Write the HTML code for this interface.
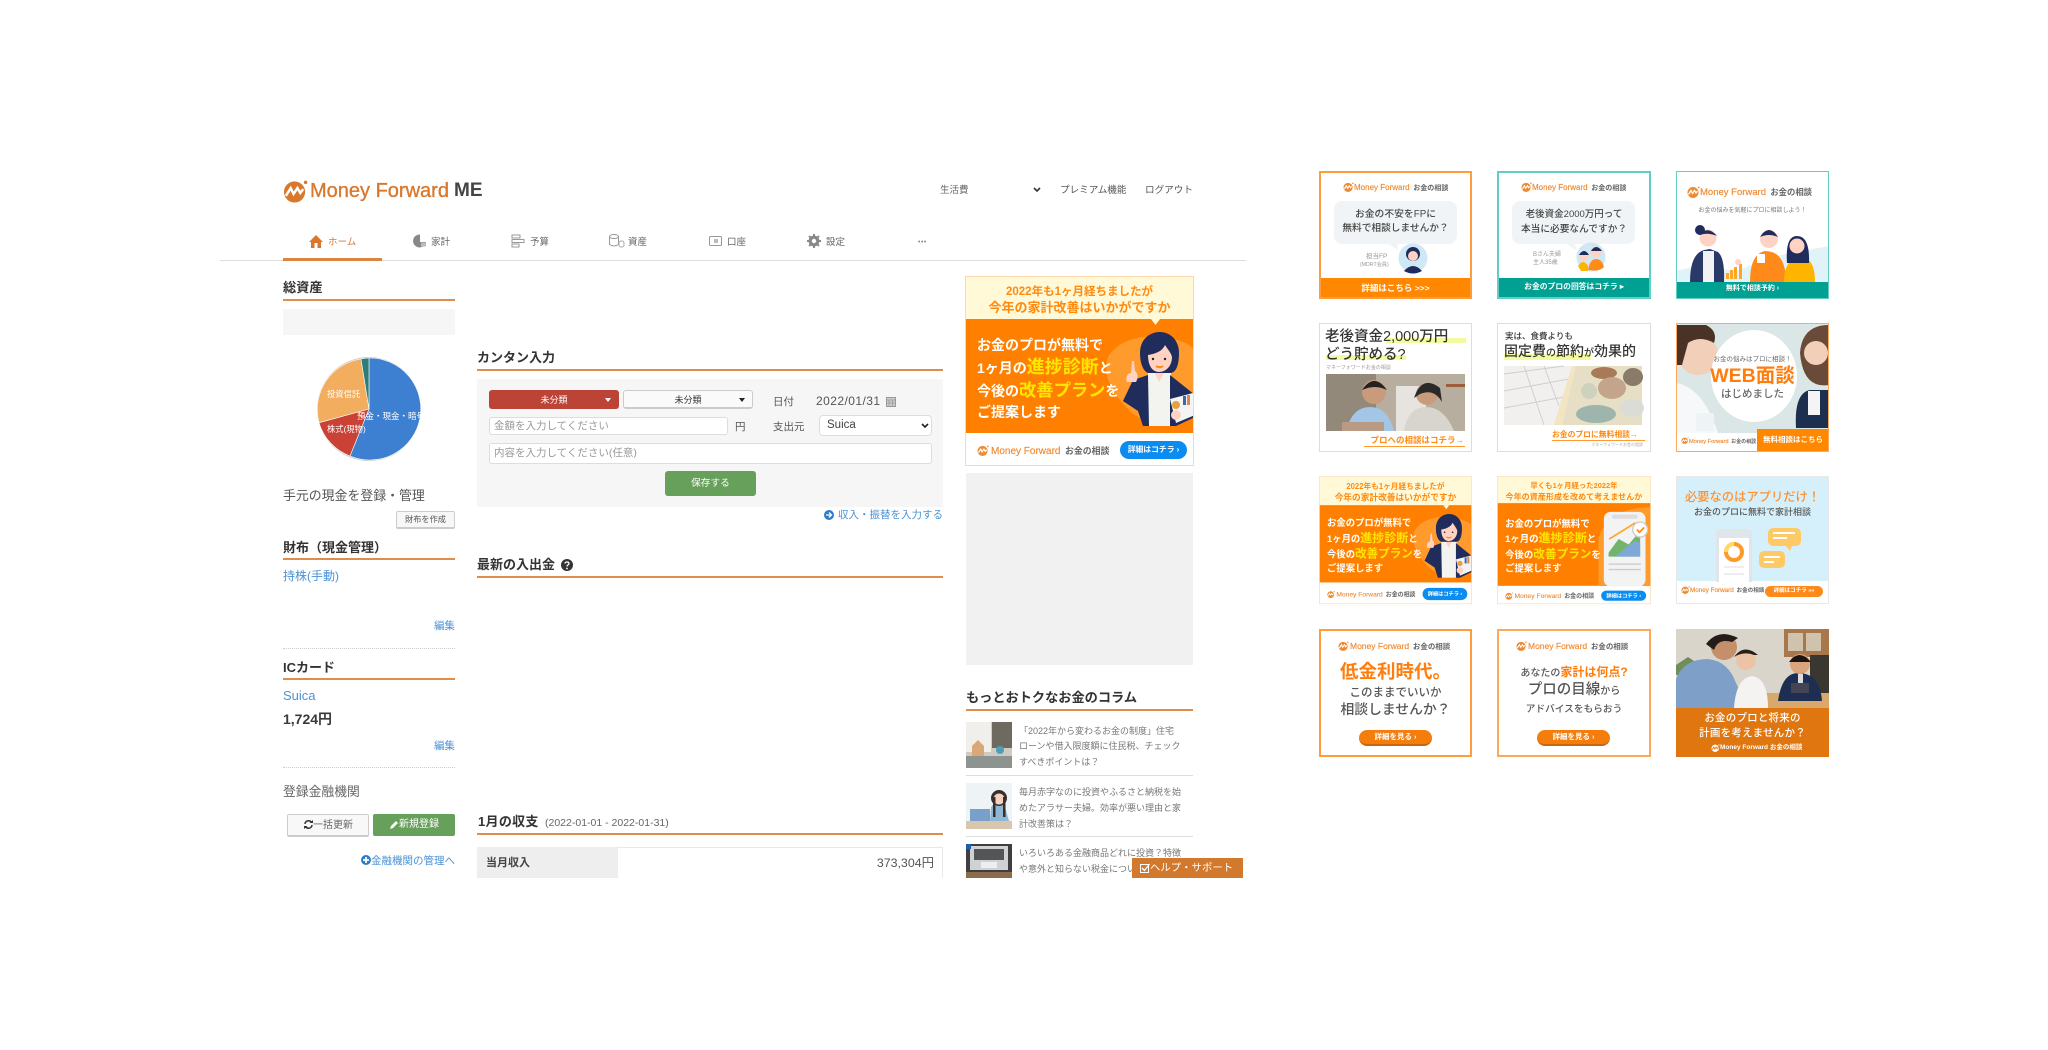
<!DOCTYPE html>
<html lang="ja"><head><meta charset="utf-8"><title>Money Forward ME</title>
<style>
html,body{margin:0;padding:0;background:#fff}
body{width:2048px;height:1050px;overflow:hidden;position:relative;font-family:"Liberation Sans","Noto Sans CJK JP",sans-serif;color:#444}
#w{position:absolute;left:0;top:0;width:2048px;height:1050px;filter:blur(.35px)}
#p{position:absolute;left:0;top:0;width:1300px;height:878px;overflow:hidden}
.t{position:absolute;white-space:nowrap;line-height:0;margin-top:1px}
.c{left:0;width:100%;text-align:center}
.r{position:absolute}
svg.s{position:absolute;overflow:visible}
.h{font-weight:700;font-size:13px;color:#333}
.u{position:absolute;height:2px;background:#e08c4c}
.lk{color:#4a93d6}
.inp{position:absolute;background:#fff;border:1px solid #ddd;border-radius:3px;box-sizing:border-box}
.ad{position:absolute;overflow:hidden;box-sizing:border-box;background:#fff}
.big{width:229px;height:189px;transform-origin:0 0;border:1px solid #fbd9ae}
.lg{font-size:8px;color:#ee8a32;-webkit-text-stroke:.15px #ee8a32}
.lg b{font-size:.88em;color:#666;font-weight:700;margin-left:.2em;-webkit-text-stroke:0}
.y{color:#ffe600}
.w{color:#fff;font-weight:700}
.o{color:#ff8a10;font-weight:700}
.g{color:#555;font-weight:700}
</style></head><body>
<svg width="0" height="0" style="position:absolute"><defs>
<symbol id="mf" viewBox="0 0 26 24"><circle cx="12" cy="13" r="11" fill="currentColor"/><path d="M3 17 L8 9 L11 15 L15 9 L18 14 L21 10" fill="none" stroke="var(--z,#fff)" stroke-width="2.6"/><circle cx="23.5" cy="3" r="1.8" fill="currentColor"/></symbol>
<symbol id="girl" viewBox="0 0 229 189">
<path d="M142 80C150 66 170 58 190 60C210 60 229 68 229 76L229 132C215 148 180 152 162 132C146 116 136 98 142 80Z" fill="#ff9a2c"/>
<rect x="182" y="96" width="23" height="53" fill="#f3f3f0"/>
<path d="M182 98L167 103L157 124L172 134L177 149L183 149Z" fill="#1f2c5c"/>
<path d="M204 98L229 118V140L210 149L204 149Z" fill="#1f2c5c"/>
<path d="M187 92L193 105L200 92Z" fill="#ffd2c4"/>
<path d="M174 76C174 62 184 55 194 55C204 55 213 63 213 76C213 88 210 96 204 96H182C177 94 174 86 174 76Z" fill="#1f2c5c"/>
<path d="M182 78C188 77 196 75 199 68C203 74 205 76 206 80C206 89 200 95 193 95C186 95 182 88 182 78Z" fill="#ffd2c4"/>
<path d="M190 89q4 2.500 7 0" stroke="#ff8a10" stroke-width="2" fill="none"/>
<circle cx="187" cy="82" r="1.200" fill="#222"/><circle cx="199" cy="82" r="1.200" fill="#222"/>
<path d="M165 96C160 96 160 102 161 105L170 105C173 100 171 95 169 94L168 84L166 84Z" fill="#ffd2c4"/>
<path d="M204 122L227 116L229 138L210 146Z" fill="#f4f4f4"/><circle cx="210" cy="128" r="4" fill="#e9a23a"/><rect x="217" y="119" width="3" height="9" fill="#3b6aa8"/><rect x="221" y="118" width="3" height="10" fill="#d84"/><circle cx="210" cy="138" r="5" fill="#ffd2c4"/>
</symbol>
</defs></svg>
<div id="w">
<div id="p">
<!-- header -->
<svg class="s" style="left:283px;top:179px;width:25px;height:24px;color:#d9782d"><use href="#mf"/></svg>
<div class="t lg" style="left:310px;top:190px;font-size:20px;color:#d9782d;-webkit-text-stroke:.35px #d9782d">Money Forward</div>
<div class="t" style="left:454px;top:190px;font-size:19px;color:#444;font-weight:700">ME</div>
<div class="t" style="left:940px;top:190px;font-size:9.500px;color:#666">生活費</div>
<svg class="s" style="left:1033px;top:187px;width:8px;height:6px"><path d="M1 1l3 3 3-3" stroke="#333" stroke-width="1.600" fill="none"/></svg>
<div class="t" style="left:1060px;top:190px;font-size:9.600px;color:#555">プレミアム機能</div>
<div class="t" style="left:1145px;top:190px;font-size:9.600px;color:#555">ログアウト</div>
<!-- nav -->
<div class="r" style="left:220px;top:260px;width:1026px;height:1px;background:#ddd"></div>
<div class="r" style="left:283px;top:258px;width:99px;height:3px;background:#dc8540"></div>
<svg class="s" style="left:309px;top:235px;width:14px;height:13px"><path d="M7 0L14 7H12V13H8.500V8H5.500V13H2V7H0Z" fill="#d9782d"/></svg>
<div class="t" style="left:328px;top:242px;font-size:9.500px;color:#d9782d">ホーム</div>
<svg class="s" style="left:413px;top:234px;width:14px;height:14px"><path d="M7 .5A6.500 6.500 0 1 0 13 8H7Z" fill="#888"/><rect x="8" y="8.500" width="5" height="4" fill="#bbb"/></svg>
<div class="t" style="left:431px;top:242px;font-size:9.500px;color:#666">家計</div>
<svg class="s" style="left:511px;top:234px;width:14px;height:14px"><path d="M1 1h8v3H1zM1 5.500h12v3H1zM1 10h7v3H1z" fill="none" stroke="#999" stroke-width="1"/></svg>
<div class="t" style="left:530px;top:242px;font-size:9.500px;color:#666">予算</div>
<svg class="s" style="left:609px;top:234px;width:15px;height:14px"><ellipse cx="5" cy="2.500" rx="4.500" ry="2" fill="none" stroke="#999"/><path d="M.5 2.500v8q4.500 3 9 0v-8" fill="none" stroke="#999"/><rect x="10" y="7" width="5" height="6" rx="2" fill="none" stroke="#aaa"/></svg>
<div class="t" style="left:628px;top:242px;font-size:9.500px;color:#666">資産</div>
<svg class="s" style="left:709px;top:235px;width:13px;height:12px"><rect x=".5" y="1.500" width="12" height="9" rx="1" fill="none" stroke="#999"/><rect x="5" y="4" width="4" height="4" fill="#bbb"/></svg>
<div class="t" style="left:727px;top:242px;font-size:9.500px;color:#666">口座</div>
<svg class="s" style="left:807px;top:234px;width:14px;height:14px"><circle cx="7" cy="7" r="3.800" fill="none" stroke="#888" stroke-width="3.200"/><path d="M7 0v14M0 7h14M2 2l10 10M12 2L2 12" stroke="#888" stroke-width="2" stroke-dasharray="2 10"/></svg>
<div class="t" style="left:826px;top:242px;font-size:9.500px;color:#666">設定</div>
<div class="t" style="left:918px;top:242px;font-size:7px;color:#888;letter-spacing:.5px">•••</div>

<!-- left col -->
<div class="t h" style="left:283px;top:287px;font-size:13.200px">総資産</div><div class="u" style="left:283px;top:299px;width:172px"></div>
<div class="r" style="left:283px;top:309px;width:172px;height:26px;background:#f6f6f6;border-radius:2px"></div>
<svg class="s" style="left:0;top:1px;width:500px;height:500px">
<circle cx="369" cy="408" r="52" fill="#ccc"/>
<path d="M369 408L369 357A51 51 0 1 1 350 455Z" fill="#3d7fd0" stroke="#fff" stroke-width=".6"/>
<path d="M369 408L350 455A51 51 0 0 1 319 421.700Z" fill="#c94235" stroke="#fff" stroke-width=".6"/>
<path d="M369 408L319 421.700A51 51 0 0 1 361 358Z" fill="#f2ad5e" stroke="#fff" stroke-width=".6"/>
<path d="M369 408L361 358A51 51 0 0 1 369 357Z" fill="#2f7d79" stroke="#fff" stroke-width=".6"/>
</svg>
<div class="t" style="left:327px;top:393px;font-size:8.300px;color:#fff">投資信託</div>
<div class="r" style="left:357px;top:410px;width:64px;height:12px;line-height:12px;font-size:8.500px;color:#fff;overflow:hidden;white-space:nowrap">預金・現金・暗号資産</div>
<div class="t" style="left:327px;top:428px;font-size:8.300px;color:#fff">株式(現物)</div>
<div class="t" style="left:283px;top:495px;font-size:12.900px;color:#555">手元の現金を登録・管理</div>
<div class="r" style="left:396px;top:511px;width:59px;height:18px;box-sizing:border-box;border:1px solid #ccc;border-bottom:2px solid #ccc;border-radius:2px;background:#f7f7f7;text-align:center;line-height:15px;font-size:8.200px;color:#555">財布を作成</div>
<div class="t h" style="left:283px;top:547px">財布（現金管理）</div><div class="u" style="left:283px;top:558px;width:172px"></div>
<div class="t lk" style="left:283px;top:575px;font-size:12px">持株(手動)</div>
<div class="t lk" style="right:845px;top:625px;font-size:10.500px">編集</div>
<div class="r" style="left:283px;top:648px;width:172px;border-top:1px dotted #ccc"></div>
<div class="t h" style="left:283px;top:667px">ICカード</div><div class="u" style="left:283px;top:678px;width:172px"></div>
<div class="t lk" style="left:283px;top:695px;font-size:13px">Suica</div>
<div class="t" style="left:283px;top:718px;font-size:14px;font-weight:700;color:#3a3a3a">1,724円</div>
<div class="t lk" style="right:845px;top:745px;font-size:10.500px">編集</div>
<div class="r" style="left:283px;top:767px;width:172px;border-top:1px dotted #ccc"></div>
<div class="t" style="left:283px;top:791px;font-size:12.800px;color:#666">登録金融機関</div>
<div class="r" style="left:287px;top:814px;width:82px;height:23px;box-sizing:border-box;border:1px solid #ccc;border-bottom:2px solid #ccc;border-radius:2px;background:#f8f8f8"></div>
<svg class="s" style="left:304px;top:820px;width:9px;height:9px"><path d="M1 4a3.500 3.500 0 0 1 6.500-1.500M8 5a3.500 3.500 0 0 1-6.500 1.500" stroke="#333" stroke-width="1.500" fill="none"/><path d="M5.500 3h3.500V0zM3.500 6H0v3z" fill="#333"/></svg>
<div class="t" style="left:313px;top:825px;font-size:10px;color:#666">一括更新</div>
<div class="r" style="left:373px;top:814px;width:82px;height:22px;border-radius:2px;background:#67a05b"></div>
<svg class="s" style="left:390px;top:820px;width:9px;height:9px"><path d="M0 9L1 6L6 1L8 3L3 8Z" fill="#fff"/></svg>
<div class="t" style="left:399px;top:824px;font-size:10px;color:#fff">新規登録</div>
<svg class="s" style="left:361px;top:855px;width:10px;height:10px"><circle cx="5" cy="5" r="5" fill="#2e7cc6"/><path d="M5 2v6M2 5h6" stroke="#fff" stroke-width="1.800"/></svg>
<div class="t lk" style="right:845px;top:860px;font-size:10.500px">金融機関の管理へ</div>

<!-- center col -->
<div class="t h" style="left:477px;top:357px">カンタン入力</div><div class="u" style="left:477px;top:369px;width:466px"></div>
<div class="r" style="left:477px;top:379px;width:466px;height:128px;background:#f6f6f6"></div>
<div class="r" style="left:489px;top:390px;width:130px;height:19px;border-radius:3px;background:#bc4436;text-align:center;line-height:20px;font-size:9px;color:#fff">未分類</div>
<div class="r" style="left:605px;top:398px;border:3px solid transparent;border-top:4px solid #fff;border-bottom:0"></div>
<div class="r" style="left:623px;top:390px;width:130px;height:19px;box-sizing:border-box;border:1px solid #ccc;border-bottom:2px solid #ccc;border-radius:3px;background:#fafafa;text-align:center;line-height:18px;font-size:9px;color:#333">未分類</div>
<div class="r" style="left:739px;top:398px;border:3px solid transparent;border-top:4px solid #222;border-bottom:0"></div>
<div class="t" style="left:773px;top:401px;font-size:10.500px;color:#555">日付</div>
<div class="t" style="left:816px;top:400px;font-size:12px;color:#555;letter-spacing:.45px">2022/01/31</div>
<svg class="s" style="left:886px;top:396px;width:10px;height:11px"><rect x=".5" y="1.500" width="9" height="9" fill="#ccc" stroke="#999"/><path d="M0 4h10M3 4v6M6.500 4v6M0 7h10" stroke="#999" stroke-width=".7"/></svg>
<div class="inp" style="left:489px;top:417px;width:239px;height:18px"></div>
<div class="t" style="left:494px;top:425px;font-size:10.500px;color:#999">金額を入力してください</div>
<div class="t" style="left:735px;top:426px;font-size:10.500px;color:#555">円</div>
<div class="t" style="left:773px;top:426px;font-size:10.500px;color:#555">支出元</div>
<div class="inp" style="left:819px;top:415px;width:113px;height:21px;border-radius:4px"></div>
<div class="t" style="left:827px;top:424px;font-size:11.500px;color:#444">Suica</div>
<svg class="s" style="left:921px;top:423px;width:8px;height:6px"><path d="M1 1l3 3 3-3" stroke="#222" stroke-width="1.600" fill="none"/></svg>
<div class="inp" style="left:489px;top:443px;width:443px;height:21px"></div>
<div class="t" style="left:494px;top:452px;font-size:10.500px;color:#999">内容を入力してください(任意)</div>
<div class="r" style="left:665px;top:471px;width:91px;height:25px;border-radius:3px;background:#67a05b;text-align:center;line-height:25px;font-size:9.700px;color:#fff">保存する</div>
<svg class="s" style="left:824px;top:510px;width:10px;height:10px"><circle cx="5" cy="5" r="5" fill="#2e7cc6"/><path d="M2 5h5M5 2.500L7.500 5 5 7.500" stroke="#fff" stroke-width="1.300" fill="none"/></svg>
<div class="t lk" style="right:357px;top:514px;font-size:10.500px">収入・振替を入力する</div>
<div class="t h" style="left:477px;top:564px">最新の入出金</div>
<svg class="s" style="left:561px;top:559px;width:12px;height:12px"><circle cx="6" cy="6" r="6" fill="#333"/><path d="M4 4.500C4 2.500 8 2.500 8 4.500C8 6 6 5.800 6 7.500" stroke="#fff" stroke-width="1.300" fill="none"/><circle cx="6" cy="9.500" r=".9" fill="#fff"/></svg>
<div class="u" style="left:477px;top:576px;width:466px"></div>
<div class="t h" style="left:478px;top:821px;letter-spacing:.3px">1月の収支</div>
<div class="t" style="left:545px;top:822px;font-size:10.500px;color:#666">(2022-01-01 - 2022-01-31)</div>
<div class="u" style="left:477px;top:833px;width:466px"></div>
<div class="r" style="left:477px;top:847px;width:466px;height:40px;box-sizing:border-box;border-top:1px solid #e8e8e8;border-right:1px solid #e8e8e8"></div>
<div class="r" style="left:477px;top:847px;width:141px;height:40px;background:#eee"></div>
<div class="t" style="left:486px;top:862px;font-size:11px;font-weight:700;color:#444">当月収入</div>
<div class="t" style="right:366px;top:862px;font-size:12.400px;color:#555">373,304円</div>

<!-- right col -->
<div class="ad big" style="left:965px;top:276px;height:190px">
<div class="r" style="left:0;top:0;width:229px;height:42px;background:#fff9d8"></div>
<div class="r" style="left:0;top:42px;width:229px;height:114px;background:#ff8000"></div>
<svg class="s" style="left:0;top:0;width:229px;height:189px"><use href="#girl"/><path d="M185 42h9l-4.500 6z" fill="#fff9d8"/></svg>
<div class="t c o" style="top:14px;font-size:11.500px">2022年も1ヶ月経ちましたが</div>
<div class="t c o" style="top:30px;font-size:13px">今年の家計改善はいかがですか</div>
<div class="t w" style="left:11px;top:67px;font-size:14px">お金のプロが無料で</div>
<div class="t w" style="left:11px;top:89px;font-size:14px">1ヶ月の<span class="y" style="font-size:18px">進捗診断</span>と</div>
<div class="t w" style="left:11px;top:112px;font-size:14px">今後の<span class="y" style="font-size:17.300px">改善プラン</span>を</div>
<div class="t w" style="left:11px;top:134px;font-size:14px">ご提案します</div>
<svg class="s" style="left:11px;top:168px;width:12px;height:11px;color:#ee8a32"><use href="#mf"/></svg>
<div class="t lg" style="left:25px;top:173px;font-size:10px">Money Forward <b style="font-size:8.900px">お金の相談</b></div>
<div class="r w" style="left:154px;top:164px;width:67px;height:18px;border-radius:9px;background:#0a8cf0;text-align:center;line-height:18px;font-size:7.800px">詳細はコチラ ›</div>
</div>
<div class="r" style="left:966px;top:473px;width:227px;height:192px;background:#f1f1f1"></div>
<div class="t h" style="left:966px;top:697px;font-size:13.200px">もっとおトクなお金のコラム</div><div class="u" style="left:966px;top:709px;width:227px"></div>
<svg class="s" style="left:966px;top:722px;width:46px;height:46px"><rect width="46" height="46" fill="#cfcac2"/><rect x="0" width="25" height="30" fill="#f0efec"/><rect x="26" width="20" height="26" fill="#6f6a60"/><path d="M6 34V24l6-6 6 6v10z" fill="#d9a878"/><rect x="0" y="34" width="46" height="12" fill="#8d938f"/><circle cx="34" cy="28" r="4" fill="#4aa0b8"/></svg>
<div class="t" style="left:1019px;top:730px;font-size:9px;color:#777">「2022年から変わるお金の制度」住宅</div>
<div class="t" style="left:1019px;top:745px;font-size:9px;color:#777">ローンや借入限度額に住民税、チェック</div>
<div class="t" style="left:1019px;top:761px;font-size:9px;color:#777">すべきポイントは？</div>
<div class="r" style="left:966px;top:775px;width:227px;height:1px;background:#ddd"></div>
<svg class="s" style="left:966px;top:783px;width:46px;height:46px"><rect width="46" height="46" fill="#eef3f6"/><path d="M25 24q8-10 14 0l4 14H24z" fill="#8fb6d4"/><circle cx="33" cy="15" r="8" fill="#3a2e2a"/><circle cx="33" cy="16" r="5.500" fill="#f3d3c0"/><rect x="27" y="14" width="2.500" height="20" fill="#3a2e2a"/><rect x="37" y="14" width="2.500" height="20" fill="#3a2e2a"/><rect x="4" y="26" width="20" height="12" fill="#7a9fc9"/><rect x="0" y="38" width="46" height="8" fill="#d9c6ae"/></svg>
<div class="t" style="left:1019px;top:791px;font-size:9px;color:#777">毎月赤字なのに投資やふるさと納税を始</div>
<div class="t" style="left:1019px;top:807px;font-size:9px;color:#777">めたアラサー夫婦。効率が悪い理由と家</div>
<div class="t" style="left:1019px;top:823px;font-size:9px;color:#777">計改善策は？</div>
<div class="r" style="left:966px;top:836px;width:227px;height:1px;background:#ddd"></div>
<svg class="s" style="left:966px;top:844px;width:46px;height:34px"><rect width="46" height="34" fill="#3f3f3f"/><rect x="4" y="2" width="38" height="24" fill="#cfd2d4"/><rect x="8" y="5" width="30" height="11" fill="#555"/><rect x="15" y="18" width="16" height="6" fill="#eee"/><rect width="5" height="5" fill="#1f5fb0"/><rect y="28" width="46" height="6" fill="#8c6a4c"/></svg>
<div class="t" style="left:1019px;top:852px;font-size:9px;color:#777">いろいろある金融商品どれに投資？特徴</div>
<div class="t" style="left:1019px;top:868px;font-size:9px;color:#777">や意外と知らない税金について解説</div>
<div class="r" style="left:1132px;top:858px;width:111px;height:20px;background:#d3792e"></div>
<svg class="s" style="left:1140px;top:863px;width:10px;height:10px"><rect x=".5" y="1.500" width="8" height="8" fill="none" stroke="#fff"/><path d="M2 5l2.500 2.500L9.500 1" stroke="#fff" stroke-width="1.300" fill="none"/></svg>
<div class="t" style="left:1150px;top:868px;font-size:10.400px;color:#fff">ヘルプ・サポート</div>
</div>

<!-- B1 -->
<div class="ad" style="left:1319px;top:171px;width:153px;height:128px;border:2px solid #ff9d3c">
<div style="position:absolute;left:-2px;top:-2px;width:153px;height:128px">
<svg class="s" style="left:24px;top:11px;width:11px;height:10px;color:#ee8a32"><use href="#mf"/></svg>
<div class="t lg" style="left:35px;top:16px">Money Forward <b>お金の相談</b></div>
<div class="r" style="left:15px;top:30px;width:123px;height:43px;background:#f0f4f6;border-radius:8px"></div>
<svg class="s" style="left:68px;top:72px;width:12px;height:8px"><path d="M0 0H10L11 7Z" fill="#f0f4f6"/></svg>
<div class="t c g" style="top:43px;font-size:9.800px;font-weight:500;color:#444">お金の不安をFPに</div>
<div class="t c g" style="top:57px;font-size:9.700px;font-weight:500;color:#444">無料で相談しませんか？</div>
<div class="t" style="left:47px;top:85px;font-size:6.500px;color:#999">担当FP</div>
<div class="t" style="left:41px;top:93px;font-size:5.200px;color:#999">(MDRT会員)</div>
<svg class="s" style="left:79px;top:72px;width:30px;height:30px"><circle cx="15" cy="15" r="14.500" fill="#cfe8f5"/><path d="M6 28q9-10 18 0q-9 5-18 0z" fill="#1f2c5c"/><circle cx="15" cy="11" r="7" fill="#1f2c5c"/><circle cx="15" cy="13" r="5" fill="#ffd2c4"/></svg>
<div class="r" style="left:0;top:107px;width:153px;height:21px;background:#ff8800"></div>
<div class="t c w" style="top:116px;font-size:8.500px">詳細はこちら &gt;&gt;&gt;</div>
</div></div>
<!-- B2 -->
<div class="ad" style="left:1497px;top:171px;width:154px;height:128px;border:2px solid #62cdc2">
<div style="position:absolute;left:-2px;top:-2px;width:154px;height:128px">
<svg class="s" style="left:24px;top:11px;width:11px;height:10px;color:#ee8a32"><use href="#mf"/></svg>
<div class="t lg" style="left:35px;top:16px">Money Forward <b>お金の相談</b></div>
<div class="r" style="left:15px;top:30px;width:123px;height:43px;background:#f0f4f6;border-radius:8px"></div>
<svg class="s" style="left:68px;top:72px;width:12px;height:8px"><path d="M0 0H10L11 7Z" fill="#f0f4f6"/></svg>
<div class="t c g" style="top:43px;font-size:9.500px;font-weight:500;color:#444">老後資金2000万円って</div>
<div class="t c g" style="top:58px;font-size:9.700px;font-weight:500;color:#444">本当に必要なんですか？</div>
<div class="t" style="left:36px;top:83px;font-size:6px;color:#999">Bさん夫婦</div>
<div class="t" style="left:36px;top:91px;font-size:6px;color:#999">主人35歳</div>
<svg class="s" style="left:79px;top:71px;width:30px;height:30px"><circle cx="15" cy="15" r="14.500" fill="#cfe8f5"/><path d="M2 24q5-8 10 0v5H5z" fill="#ffb400"/><path d="M12 28q2-11 8-11t8 8q-4 5-16 3z" fill="#ff8c1a"/><circle cx="8" cy="14" r="5" fill="#ffd2c4"/><circle cx="20" cy="10" r="5.500" fill="#ffd2c4"/><path d="M3 13q5-8 10 0zM15 9q5-8 11 0z" fill="#1f2c5c"/></svg>
<div class="r" style="left:0;top:107px;width:154px;height:21px;background:#00a092"></div>
<div class="t c w" style="top:115px;font-size:7.800px">お金のプロの回答はコチラ ▸</div>
</div></div>
<!-- B3 -->
<div class="ad" style="left:1676px;top:171px;width:153px;height:128px;border:1px solid #62cdc2">
<div style="position:absolute;left:-1px;top:-1px;width:153px;height:128px">
<svg class="s" style="left:11px;top:15px;width:13px;height:12px;color:#ee8a32"><use href="#mf"/></svg>
<div class="t lg" style="left:24px;top:20px;font-size:9.500px">Money Forward <b>お金の相談</b></div>
<div class="t c" style="top:39px;font-size:6px;color:#777">お金の悩みを気軽にプロに相談しよう！</div>
<svg class="s" style="left:0;top:50px;width:153px;height:61px"><path d="M0 50L25 44 60 50 100 35 153 25V61H0Z" fill="#e0f3f8"/>
<path d="M14 61q0-28 14-32l6-1 8 3q7 6 6 30z" fill="#2a3a68"/><rect x="27" y="30" width="11" height="31" fill="#f2f2f2"/><circle cx="32" cy="17" r="8.500" fill="#ffd2c4"/><circle cx="24" cy="9" r="5" fill="#1f2c5c"/><path d="M23 14q9-10 18 1q-9-4-18-1z" fill="#1f2c5c"/>
<path d="M74 61q0-28 15-31q21 0 21 31z" fill="#ff8a1a"/><circle cx="93" cy="18" r="9" fill="#ffd2c4"/><path d="M84 16q9-14 18 0q-9-4-18 0z" fill="#1f2c5c"/><rect x="81" y="33" width="8" height="9" fill="#fff"/>
<path d="M108 61q0-23 16-25q15 0 15 25z" fill="#ffb400"/><path d="M111 42q-2-27 10-27q13 0 12 27z" fill="#1f2c5c"/><circle cx="121" cy="25" r="7.500" fill="#ffd2c4"/>
<path d="M50 58v-6h3v6zM54 58v-9h3v9zM58 58v-12h3v12zM63 58v-15h3v15z" fill="#ffa528"/><circle cx="62" cy="41" r="3" fill="#ffd2c4"/></svg>
<div class="r" style="left:0;top:111px;width:153px;height:17px;background:#00a092"></div>
<div class="t c w" style="top:117px;font-size:7px">無料で相談予約 ›</div>
</div></div>
<!-- B4 -->
<div class="ad" style="left:1319px;top:323px;width:153px;height:129px;border:1px solid #ddd">
<div class="r" style="left:66px;top:14px;width:80px;height:5px;background:#f3fb9e"></div>
<div class="r" style="left:6px;top:31px;width:80px;height:5px;background:#f3fb9e"></div>
<div class="t" style="left:5px;top:12px;font-size:14.500px;font-weight:500;color:#333">老後資金2,000万円</div>
<div class="t" style="left:5px;top:30px;font-size:14.500px;font-weight:500;color:#333">どう貯める?</div>
<div class="t" style="left:6px;top:43px;font-size:5px;color:#999">マネーフォワードお金の相談</div>
<svg class="s" style="left:6px;top:50px;width:139px;height:57px"><rect width="139" height="57" fill="#b7ae9f"/><rect x="0" width="50" height="57" fill="#93897a"/><rect x="70" y="12" width="30" height="45" fill="#e7e4df"/><rect x="120" y="10" width="19" height="3" fill="#9c5f3c"/>
<path d="M20 57q6-24 24-24t24 24z" fill="#a3c5e6"/><circle cx="48" cy="18" r="12" fill="#c99a7b"/><path d="M36 16q12-18 25 0q-12-6-25 0z" fill="#222"/><rect x="16" y="48" width="42" height="9" fill="#b99b85"/>
<path d="M78 57q4-24 22-24t28 24z" fill="#d8d5cf"/><circle cx="101" cy="20" r="11" fill="#c99a7b"/><path d="M88 24q8-24 26-10l2 14q-8-14-22-8z" fill="#2a2a2a"/></svg>
<div class="t o" style="right:7px;top:115px;font-size:8.500px">プロへの相談はコチラ→</div>
<div class="r" style="left:44px;top:122px;width:101px;height:1px;background:#ff9a30"></div>
</div>
<!-- B5 -->
<div class="ad" style="left:1497px;top:323px;width:154px;height:129px;border:1px solid #ddd">
<div class="r" style="left:6px;top:30px;width:87px;height:6px;background:#f3fb9e"></div>
<div class="t" style="left:7px;top:11px;font-size:8.500px;font-weight:500;color:#333">実は、食費よりも</div>
<div class="t" style="left:6px;top:26px;font-size:14px;font-weight:500;color:#333">固定費<span style="font-size:10px">の</span>節約<span style="font-size:10px">が</span>効果的</div>
<svg class="s" style="left:6px;top:42px;width:138px;height:59px"><rect width="138" height="59" fill="#f1f0ee"/><path d="M0 8L60 0M0 25L70 12M0 42L65 30M20 0L40 59M40 0L55 40" stroke="#cfcfcf"/><path d="M50 59L68 0H138V59Z" fill="#e6dfc6"/><path d="M50 59L68 0H72L58 59Z" fill="#f3e5c2"/><circle cx="85" cy="25" r="8" fill="#cdd2bd"/><ellipse cx="92" cy="48" rx="20" ry="9" fill="#9db5ad"/>
<ellipse cx="100" cy="7" rx="13" ry="6" fill="#a87a58"/><ellipse cx="108" cy="22" rx="14" ry="11" fill="#c2a58a"/><ellipse cx="129" cy="11" rx="10" ry="9" fill="#8a7a68"/><ellipse cx="128" cy="42" rx="12" ry="9" fill="#dcdcd6"/></svg>
<div class="t o" style="left:54px;top:110px;font-size:7.800px">お金のプロに無料相談→</div>
<div class="r" style="left:54px;top:116px;width:93px;height:1px;background:#ff9a30"></div>
<div class="t" style="right:7px;top:120px;font-size:4px;color:#aaa">マネーフォワードお金の相談</div>
</div>
<!-- B6 -->
<div class="ad" style="left:1676px;top:323px;width:153px;height:129px;border:1px solid #ffa85a">
<svg class="s" style="left:-1px;top:-1px;width:153px;height:129px"><rect width="153" height="129" fill="#dbe6e6"/><path d="M0 60q30 5 45 60H0z" fill="#f6f8fa"/><circle cx="22" cy="32" r="20" fill="#f2cfb8"/><path d="M0 2H30q12 6 8 18q-14-8-26 0l-6 22H0z" fill="#4a3226"/>
<path d="M120 105q-2-35 14-38l19 0v38z" fill="#1d2f4f"/><rect x="132" y="68" width="12" height="24" fill="#f4f4f4"/><path d="M124 30q2-28 29-28v60q-26 4-29-32z" fill="#6a4a38"/><circle cx="140" cy="30" r="12" fill="#f2cfb8"/>
<ellipse cx="78" cy="53" rx="43" ry="46" fill="#fff"/><rect x="20" y="90" width="18" height="18" rx="2" fill="#eef3f5"/></svg>
<div class="t c" style="top:35px;font-size:6.500px;color:#666">お金の悩みはプロに相談！</div>
<div class="t c o" style="top:51px;font-size:19.500px;color:#ff7d0c">WEB面談</div>
<div class="t c" style="top:69px;font-size:10.500px;color:#666;font-weight:500">はじめました</div>
<div class="r" style="left:0;top:109px;width:80px;height:20px;background:#fff"></div>
<svg class="s" style="left:4px;top:113px;width:8px;height:7px;color:#ee8a32"><use href="#mf"/></svg>
<div class="t lg" style="left:12px;top:117px;font-size:5.700px">Money Forward <b>お金の相談</b></div>
<div class="r" style="left:80px;top:105px;width:73px;height:24px;background:#ff8800"></div>
<div class="t w" style="left:86px;top:115px;font-size:7.500px">無料相談はこちら</div>
</div>

<!-- B7 -->
<div class="ad big" style="left:1319px;top:476px;transform:scale(.668,.678)">
<div class="r" style="left:0;top:0;width:229px;height:42px;background:#fff9d8"></div>
<div class="r" style="left:0;top:42px;width:229px;height:114px;background:#ff8000"></div>
<svg class="s" style="left:0;top:0;width:229px;height:189px"><use href="#girl"/><path d="M185 42h9l-4.500 6z" fill="#fff9d8"/></svg>
<div class="t c o" style="top:14px;font-size:11.500px">2022年も1ヶ月経ちましたが</div>
<div class="t c o" style="top:30px;font-size:13px">今年の家計改善はいかがですか</div>
<div class="t w" style="left:11px;top:67px;font-size:14px">お金のプロが無料で</div>
<div class="t w" style="left:11px;top:89px;font-size:14px">1ヶ月の<span class="y" style="font-size:18px">進捗診断</span>と</div>
<div class="t w" style="left:11px;top:112px;font-size:14px">今後の<span class="y" style="font-size:17.300px">改善プラン</span>を</div>
<div class="t w" style="left:11px;top:134px;font-size:14px">ご提案します</div>
<svg class="s" style="left:11px;top:168px;width:12px;height:11px;color:#ee8a32"><use href="#mf"/></svg>
<div class="t lg" style="left:25px;top:173px;font-size:10px">Money Forward <b style="font-size:8.900px">お金の相談</b></div>
<div class="r w" style="left:154px;top:164px;width:67px;height:18px;border-radius:9px;background:#0a8cf0;text-align:center;line-height:18px;font-size:7.800px">詳細はコチラ ›</div>
</div>
<!-- B8 -->
<div class="ad big" style="left:1497px;top:476px;transform:scale(.672,.678)">
<div class="r" style="left:0;top:0;width:229px;height:39px;background:#fff9d8"></div>
<div class="r" style="left:0;top:39px;width:229px;height:122px;background:#ff8000"></div>
<svg class="s" style="left:0;top:0;width:229px;height:189px"><path d="M150 90Q165 45 229 45V160H150Z" fill="#ff9a2c"/><rect x="158" y="52" width="62" height="110" rx="10" fill="#f3f3f3"/><rect x="170" y="56" width="38" height="6" rx="3" fill="#ddd"/><path d="M165 112L180 92 195 100 212 80V118H165Z" fill="#73b46c"/><path d="M175 118L190 106 205 94 212 98V118Z" fill="#7ea8d8"/><path d="M166 92L205 68" stroke="#ffa528" stroke-width="2.500"/><rect x="165" y="128" width="48" height="2" fill="#ccc"/><rect x="165" y="136" width="48" height="2" fill="#ccc"/><circle cx="212" cy="78" r="11" fill="#fff" stroke="#ccc" stroke-width="2"/><path d="M207 78l4 4 7-7" stroke="#ff8a10" stroke-width="2.500" fill="none"/></svg>
<div class="t c o" style="top:13px;font-size:11px">早くも1ヶ月経った2022年</div>
<div class="t c o" style="top:29px;font-size:12px">今年の資産形成を改めて考えませんか</div>
<div class="t w" style="left:11px;top:68px;font-size:14px">お金のプロが無料で</div>
<div class="t w" style="left:11px;top:89px;font-size:14px">1ヶ月の<span class="y" style="font-size:18px">進捗診断</span>と</div>
<div class="t w" style="left:11px;top:113px;font-size:14px">今後の<span class="y" style="font-size:17.300px">改善プラン</span>を</div>
<div class="t w" style="left:11px;top:134px;font-size:14px">ご提案します</div>
<svg class="s" style="left:11px;top:170px;width:12px;height:12px;color:#ee8a32"><use href="#mf"/></svg>
<div class="t lg" style="left:25px;top:175px;font-size:10px">Money Forward <b style="font-size:8.900px">お金の相談</b></div>
<div class="r w" style="left:154px;top:168px;width:67px;height:15px;border-radius:9px;background:#0a8cf0;text-align:center;line-height:15px;font-size:7.800px">詳細はコチラ ›</div>
</div>
<!-- B9 -->
<div class="ad" style="left:1676px;top:476px;width:153px;height:128px;border:1px solid #e8e8e8">
<div style="position:absolute;left:-1px;top:-1px;width:153px;height:128px">
<div class="r" style="left:0;top:0;width:153px;height:105px;background:#d6f0fb"></div>
<div class="t c" style="top:20px;font-size:12.300px;font-weight:500;color:#ff9130">必要なのはアプリだけ！</div>
<div class="t c g" style="top:35px;font-size:9px;font-weight:500">お金のプロに無料で家計相談</div>
<svg class="s" style="left:0;top:50px;width:153px;height:58px"><path d="M40 56V8q0-5 5-5h26q5 0 5 5v48z" fill="#dfe5e8"/><path d="M43 12h30v44H43z" fill="#fff"/><circle cx="58" cy="26" r="8" fill="none" stroke="#ff9a28" stroke-width="4"/><path d="M50 26a8 8 0 0 1 8-8" stroke="#ffd966" stroke-width="4" fill="none"/><path d="M48 41h20M48 48h20" stroke="#ddd"/><rect x="92" y="2" width="33" height="18" rx="5" fill="#ffc965"/><path d="M97 7h22M97 12h14" stroke="#fff" stroke-width="2"/><path d="M110 20l6 0-2 5z" fill="#ffc965"/><rect x="83" y="25" width="26" height="17" rx="5" fill="#ffc965"/><path d="M88 31h16M88 36h10" stroke="#fff" stroke-width="2"/></svg>
<svg class="s" style="left:5px;top:110px;width:9px;height:8px;color:#ee8a32"><use href="#mf"/></svg>
<div class="t lg" style="left:14px;top:114px;font-size:6.300px">Money Forward <b>お金の相談</b></div>
<div class="r w" style="left:89px;top:110px;width:58px;height:11px;border-radius:6px;background:#ff8a1c;text-align:center;line-height:11px;font-size:5.500px">詳細はコチラ »»</div>
</div></div>
<!-- B10 -->
<div class="ad" style="left:1319px;top:629px;width:153px;height:128px;border:2px solid #ff9d3c">
<div style="position:absolute;left:-2px;top:-2px;width:153px;height:128px">
<svg class="s" style="left:19px;top:12px;width:11px;height:10px;color:#ee8a32"><use href="#mf"/></svg>
<div class="t lg" style="left:31px;top:16px;font-size:8.500px">Money Forward <b>お金の相談</b></div>
<div class="t c o" style="top:42px;font-size:18.500px;color:#ff7d0c">低金利時代。</div>
<div class="t c g" style="top:63px;font-size:11.500px;font-weight:500">このままでいいか</div>
<div class="t c g" style="top:80px;font-size:13.800px;font-weight:500">相談しませんか？</div>
<div class="r w" style="left:40px;top:101px;width:73px;height:16px;box-sizing:border-box;border-bottom:2px solid #c9650a;border-radius:8px;background:#f47d0c;text-align:center;line-height:13px;font-size:7.500px">詳細を見る ›</div>
</div></div>
<!-- B11 -->
<div class="ad" style="left:1497px;top:629px;width:154px;height:128px;border:2px solid #ffa85a">
<div style="position:absolute;left:-2px;top:-2px;width:154px;height:128px">
<svg class="s" style="left:19px;top:12px;width:11px;height:10px;color:#ee8a32"><use href="#mf"/></svg>
<div class="t lg" style="left:31px;top:16px;font-size:8.500px">Money Forward <b>お金の相談</b></div>
<div class="t c g" style="top:42px;font-size:10px;font-weight:500">あなたの<span class="o" style="font-size:12px;color:#ff7d0c">家計は何点?</span></div>
<div class="t c g" style="top:60px;font-size:14.500px;font-weight:500">プロの目線<span style="font-size:10px">から</span></div>
<div class="t c g" style="top:80px;font-size:9.700px;font-weight:500">アドバイスをもらおう</div>
<div class="r w" style="left:40px;top:101px;width:73px;height:16px;box-sizing:border-box;border-bottom:2px solid #c9650a;border-radius:8px;background:#f47d0c;text-align:center;line-height:13px;font-size:7.500px">詳細を見る ›</div>
</div></div>
<!-- B12 -->
<div class="ad" style="left:1676px;top:629px;width:153px;height:128px">
<svg class="s" style="left:0;top:0;width:153px;height:79px"><rect width="153" height="79" fill="#d9d5cb"/><rect x="108" width="45" height="28" fill="#a8784a"/><rect x="112" y="4" width="15" height="18" fill="#cfc3ad"/><rect x="130" y="4" width="15" height="18" fill="#cfc3ad"/><rect x="134" y="26" width="19" height="40" fill="#3a3630"/><path d="M0 36l12-8 12 8v10H0z" fill="#6f8f5a"/><rect x="0" y="64" width="153" height="15" fill="#d9a86c"/>
<path d="M0 79V50q8-20 32-20q20 2 28 24l12 25z" fill="#7d9fc8"/><circle cx="48" cy="18" r="13" fill="#c58f6a"/><path d="M30 15q12-16 32-6l-6 4q-14-4-18 8z" fill="#241c18"/>
<path d="M58 79q2-30 18-32q16 2 16 32z" fill="#f4f3f1"/><circle cx="70" cy="31" r="10" fill="#ecc3a5"/><path d="M58 28q10-14 24-2l-4 0q-10-4-20 2z" fill="#2a1f18"/>
<path d="M102 72q4-28 20-28q22 0 24 28z" fill="#1e2d52"/><circle cx="124" cy="35" r="10" fill="#d9a47e"/><path d="M113 33q10-14 22 0z" fill="#1b1512"/><rect x="122" y="45" width="5" height="10" fill="#ddd"/><rect x="115" y="54" width="18" height="10" fill="#445"/></svg>
<div class="r" style="left:0;top:79px;width:153px;height:49px;background:#e0760f"></div>
<div class="t c w" style="top:88px;font-size:10.500px;letter-spacing:.2px;font-weight:500">お金のプロと将来の</div>
<div class="t c w" style="top:103px;font-size:10.500px;letter-spacing:.2px;font-weight:500">計画を考えませんか？</div>
<svg class="s" style="left:35px;top:115px;width:9px;height:8px;color:#fff;--z:#e0760f"><use href="#mf"/></svg>
<div class="t" style="left:44px;top:118px;font-size:6.500px;color:#fff;font-weight:700">Money Forward お金の相談</div>
</div>
</div>
</body></html>
